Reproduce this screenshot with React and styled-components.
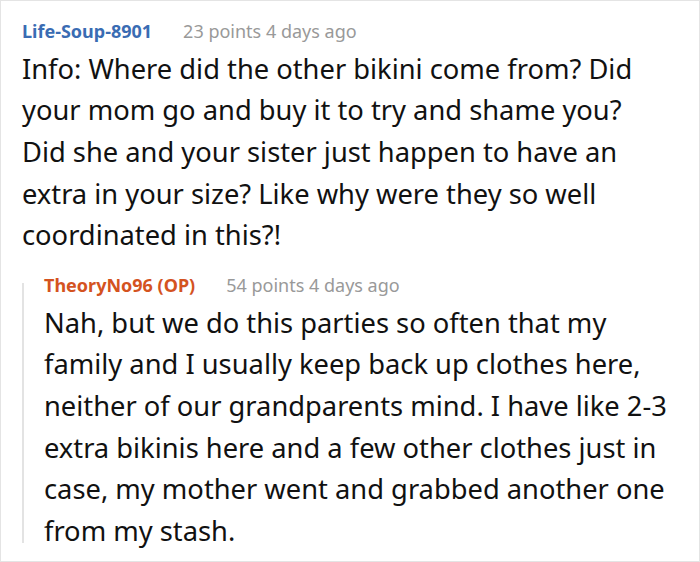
import styled, { createGlobalStyle } from 'styled-components'

const GlobalStyle = createGlobalStyle`
  html, body {
    margin: 0;
    padding: 0;
    background: #fff;
  }
  body {
    font-family: "Noto Sans", "Open Sans", "DejaVu Sans", sans-serif;
  }
`

const Frame = styled.div`
  box-sizing: border-box;
  width: 700px;
  height: 562px;
  border: 1px solid #e4e4e4;
  padding: 17px 12px 0 21px;
  overflow: hidden;
`

const Comment = styled.div`
  display: flex;
  flex-direction: column;
`

const Header = styled.div`
  display: flex;
  align-items: baseline;
  gap: 31px;
  margin-bottom: 3.5px;
  font-size: 18px;
  line-height: 26px;
`

const Author = styled.span`
  font-weight: 700;
  color: ${(p) => (p.$op ? '#d4531f' : '#3a6cb3')};
`

const Meta = styled.span`
  color: #999;
`

const Body = styled.p`
  margin: 0;
  max-width: ${(p) => p.$maxWidth || 'none'};
  font-size: 27.3px;
  line-height: 41.7px;
  color: #111;
`

const Reply = styled.div`
  position: relative;
  margin-top: 16px;
  padding-left: 22px;

  &::before {
    content: '';
    position: absolute;
    left: 0;
    top: 11px;
    bottom: 9px;
    width: 2px;
    background: #e3e3e3;
  }
`

const comment = {
  author: 'Life-Soup-8901',
  meta: '23 points 4 days ago',
  text: 'Info: Where did the other bikini come from? Did your mom go and buy it to try and shame you? Did she and your sister just happen to have an extra in your size? Like why were they so well coordinated in this?!',
  reply: {
    author: 'TheoryNo96 (OP)',
    meta: '54 points 4 days ago',
    text: 'Nah, but we do this parties so often that my family and I usually keep back up clothes here, neither of our grandparents mind. I have like 2-3 extra bikinis here and a few other clothes just in case, my mother went and grabbed another one from my stash.',
  },
}

export default function App() {
  return (
    <>
      <GlobalStyle />
      <Frame>
        <Comment>
          <Header>
            <Author>{comment.author}</Author>
            <Meta>{comment.meta}</Meta>
          </Header>
          <Body $maxWidth="640px">{comment.text}</Body>
          <Reply>
            <Comment>
              <Header>
                <Author $op>{comment.reply.author}</Author>
                <Meta>{comment.reply.meta}</Meta>
              </Header>
              <Body>{comment.reply.text}</Body>
            </Comment>
          </Reply>
        </Comment>
      </Frame>
    </>
  )
}
